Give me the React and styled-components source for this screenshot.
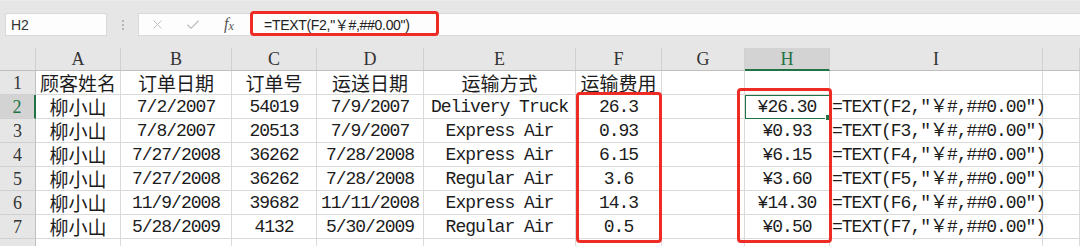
import React from 'react'
import styled, { createGlobalStyle, css } from 'styled-components'
import { X, Check } from 'lucide-react'

const GREEN = '#217346'
const RED = '#ee2b25'
const COLS = [36, 85, 111, 85, 107, 152, 86, 83, 85, 213, 37]
const LETTERS = ['A', 'B', 'C', 'D', 'E', 'F', 'G', 'H', 'I', '']

const headerRow = ['顾客姓名', '订单日期', '订单号', '运送日期', '运输方式', '运输费用', '', '', '', '']

const rows = [
  ['柳小山', '7/2/2007', '54019', '7/9/2007', 'Delivery Truck', '26.3', '', '¥26.30', 'F2'],
  ['柳小山', '7/8/2007', '20513', '7/9/2007', 'Express Air', '0.93', '', '¥0.93', 'F3'],
  ['柳小山', '7/27/2008', '36262', '7/28/2008', 'Express Air', '6.15', '', '¥6.15', 'F4'],
  ['柳小山', '7/27/2008', '36262', '7/28/2008', 'Regular Air', '3.6', '', '¥3.60', 'F5'],
  ['柳小山', '11/9/2008', '39682', '11/11/2008', 'Express Air', '14.3', '', '¥14.30', 'F6'],
  ['柳小山', '5/28/2009', '4132', '5/30/2009', 'Regular Air', '0.5', '', '¥0.50', 'F7']
]

const GlobalStyle = createGlobalStyle`
  html, body {
    margin: 0;
    padding: 0;
    background: #fff;
    overflow: hidden;
  }
`

const Page = styled.div`
  width: 1080px;
  height: 246px;
  background: #fff;
  overflow: hidden;
`

const TopBar = styled.div`
  display: flex;
  align-items: flex-start;
  height: 48px;
  padding: 12px 0 0 5px;
  box-sizing: border-box;
  background: #e6e6e6;
  border-top: 1px solid #ececec;
`

const NameBox = styled.div`
  position: relative;
  width: 102px;
  height: 23px;
  box-sizing: border-box;
  background: #fdfdfd;
  border: 1px solid #d9d9d9;
  display: flex;
  align-items: center;
  padding-left: 5px;
  font-family: 'Liberation Sans', Arial, sans-serif;
  font-size: 14px;
  color: #333;

  :after {
    content: '';
    position: absolute;
    right: 8px;
    top: 10px;
    border-left: 3px solid transparent;
    border-right: 3px solid transparent;
    border-top: 3px solid #777;
  }
`

const Dots = styled.div`
  width: 31px;
  height: 23px;
  display: flex;
  flex-direction: column;
  align-items: center;
  justify-content: center;
  gap: 2px;

  span {
    width: 2px;
    height: 2px;
    border-radius: 1px;
    background: #a6a6a6;
  }
`

const FormulaBar = styled.div`
  flex: 1;
  height: 23px;
  box-sizing: border-box;
  background: #fdfdfd;
  border: 1px solid #d9d9d9;
  border-right: none;
  display: flex;
  align-items: center;
`

const IconSlot = styled.div`
  width: 36px;
  height: 21px;
  display: flex;
  align-items: center;
  justify-content: center;
  color: #b8b8b8;
`

const Fx = styled.span`
  font-family: 'Liberation Serif', 'Times New Roman', serif;
  font-style: italic;
  font-size: 16px;
  color: #555;

  sub {
    font-size: 12px;
    vertical-align: -1px;
  }
`

const FormulaText = styled.div`
  width: 189px;
  height: 25px;
  margin: -2px 0 0 3px;
  box-sizing: border-box;
  border: 3px solid ${RED};
  border-radius: 4px;
  display: flex;
  align-items: center;
  padding-left: 11px;
  font-family: 'Liberation Sans', Arial, 'Noto Sans CJK SC', sans-serif;
  font-size: 14px;
  letter-spacing: -0.3px;
  color: #222;
  white-space: nowrap;
`

const Sheet = styled.div`
  position: relative;
  display: grid;
  grid-template-columns: ${COLS.map(w => `${w}px`).join(' ')};
  grid-template-rows: 23px repeat(8, 24px);
`

const Corner = styled.div`
  background: #e6e6e6;
  border-right: 1px solid #cfcfcf;
  border-bottom: 1px solid #bfbfbf;
  display: flex;
  align-items: flex-end;
  justify-content: flex-end;
  padding: 0 2px 3px 0;

  :after {
    content: '';
    border-left: 18px solid transparent;
    border-bottom: 18px solid #b8b8b8;
  }
`

const ColHead = styled.div`
  box-sizing: border-box;
  background: #e6e6e6;
  border-right: 1px solid #d0d0d0;
  border-bottom: 1px solid #bfbfbf;
  display: flex;
  align-items: center;
  justify-content: center;
  line-height: 1;
  font-family: 'Liberation Serif', 'Times New Roman', serif;
  font-size: 18px;
  color: #333;

  ${p =>
    p.$active &&
    css`
      background: #d3d3d3;
      color: ${GREEN};
      border-bottom: 2px solid ${GREEN};
    `}
`

const RowHead = styled(ColHead)`
  border-right: 1px solid #bfbfbf;
  border-bottom: 1px solid #d0d0d0;

  ${p =>
    p.$active &&
    css`
      background: #d3d3d3;
      color: ${GREEN};
      border-bottom: 1px solid #d0d0d0;
      border-right: 2px solid ${GREEN};
    `}
`

const Cell = styled.div`
  position: relative;
  box-sizing: border-box;
  border-right: 1px solid #dadada;
  border-bottom: 1px solid #dadada;
  display: flex;
  align-items: center;
  justify-content: ${p => (p.$left ? 'flex-start' : 'center')};
  padding-left: ${p => (p.$left ? '2px' : '0')};
  white-space: nowrap;
  line-height: 1;
  color: #1c1c1c;
  font-family: ${p =>
    p.$cjk
      ? "'Noto Sans CJK SC', sans-serif"
      : "'Liberation Mono', 'Noto Sans CJK SC', monospace"};
  font-size: ${p => (p.$cjk ? '19px' : '18px')};
  letter-spacing: ${p => (p.$cjk ? '0' : '-1px')};

  ${p =>
    p.$selected &&
    css`
      outline: 1px solid ${GREEN};
      outline-offset: -1px;
    `}
`

const Handle = styled.span`
  position: absolute;
  right: -3px;
  bottom: -3px;
  width: 5px;
  height: 5px;
  background: ${GREEN};
  border: 1px solid #fff;
  z-index: 2;
`

const Highlight = styled.div`
  position: absolute;
  box-sizing: border-box;
  border: 3px solid ${RED};
  border-radius: 4px;
  pointer-events: none;
  z-index: 3;
`

export default function App() {
  return (
    <Page>
      <GlobalStyle />
      <TopBar>
        <NameBox>H2</NameBox>
        <Dots>
          <span />
          <span />
          <span />
        </Dots>
        <FormulaBar>
          <IconSlot>
            <X size={15} strokeWidth={1.4} />
          </IconSlot>
          <IconSlot>
            <Check size={16} strokeWidth={1.6} />
          </IconSlot>
          <IconSlot>
            <Fx>
              f<sub>x</sub>
            </Fx>
          </IconSlot>
          <FormulaText>=TEXT(F2,"￥#,##0.00")</FormulaText>
        </FormulaBar>
      </TopBar>

      <Sheet>
        <Corner />
        {LETTERS.map((l, i) => (
          <ColHead key={`h-${i}`} $active={l === 'H'}>
            {l}
          </ColHead>
        ))}

        <RowHead>1</RowHead>
        {headerRow.map((t, i) => (
          <Cell key={`r1-${i}`} $cjk>
            {t}
          </Cell>
        ))}

        {rows.map((r, ri) => (
          <React.Fragment key={`row-${ri}`}>
            <RowHead $active={ri === 0}>{ri + 2}</RowHead>
            {r.slice(0, 8).map((t, ci) => (
              <Cell key={`c-${ri}-${ci}`} $cjk={ci === 0} $selected={ri === 0 && ci === 7}>
                {t}
                {ri === 0 && ci === 7 && <Handle />}
              </Cell>
            ))}
            <Cell $left>{`=TEXT(${r[8]},"￥#,##0.00")`}</Cell>
            <Cell />
          </React.Fragment>
        ))}

        <RowHead />
        {LETTERS.map((_, i) => (
          <Cell key={`e-${i}`} />
        ))}

        <Highlight style={{ left: 576, top: 44, width: 86, height: 151 }} />
        <Highlight style={{ left: 737, top: 40, width: 95, height: 155 }} />
      </Sheet>
    </Page>
  )
}
